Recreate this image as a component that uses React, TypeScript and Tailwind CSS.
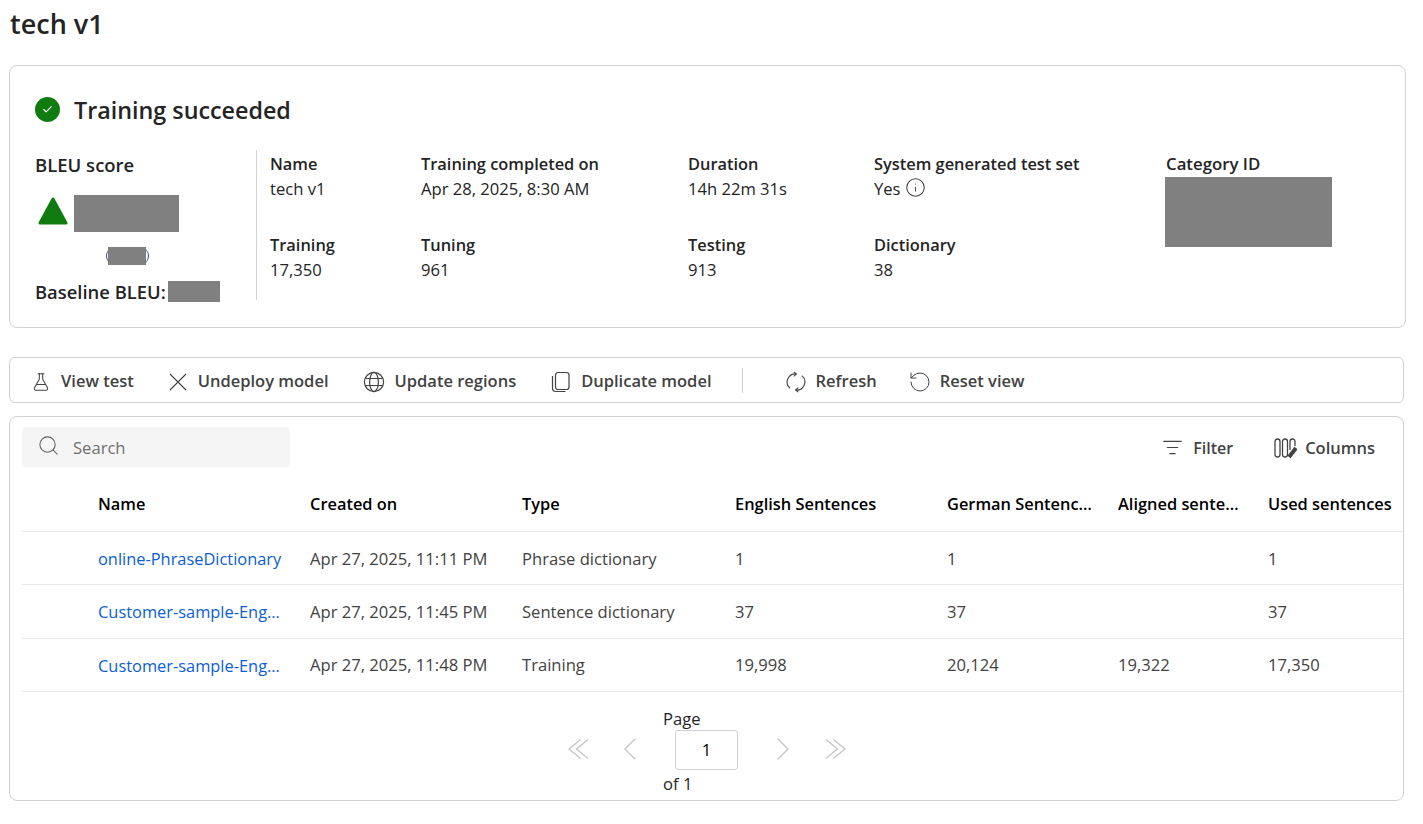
import { Search, RotateCcw, ListFilter, ChevronLeft, ChevronRight, Info, Check, FlaskConical } from 'lucide-react';

const rows = [
  { name: 'online-PhraseDictionary', created: 'Apr 27, 2025, 11:11 PM', type: 'Phrase dictionary', en: '1', de: '1', aligned: '', used: '1' },
  { name: 'Customer-sample-English-German-Sentence.txt', created: 'Apr 27, 2025, 11:45 PM', type: 'Sentence dictionary', en: '37', de: '37', aligned: '', used: '37' },
  { name: 'Customer-sample-English-German-Training.txt', created: 'Apr 27, 2025, 11:48 PM', type: 'Training', en: '19,998', de: '20,124', aligned: '19,322', used: '17,350' },
];

const gridCols = 'grid grid-cols-[76px_212px_212px_213px_212px_171px_150px_136px]';

function Field({ label, value, children }: { label: string; value: string; children?: React.ReactNode }) {
  return (
    <div>
      <div className="text-[16.4px] leading-[24px] font-semibold text-[#242424] whitespace-nowrap">{label}</div>
      <div className="text-[16.6px] leading-[26px] text-[#242424] flex items-center gap-[4px] whitespace-nowrap">{value}{children}</div>
    </div>
  );
}

function ToolButton({ icon, label, className }: { icon: React.ReactNode; label: string; className?: string }) {
  return (
    <div className={'flex items-center gap-[10px] text-[16.5px] font-semibold text-[#424242] whitespace-nowrap ' + (className || '')}>
      {icon}
      <span>{label}</span>
    </div>
  );
}

export default function App() {
  return (
    <div className="w-[1423px] h-[824px] bg-white overflow-hidden px-[9px] font-['Open_Sans','Noto_Sans',sans-serif] text-[#242424]">
      <h1 className="text-[27px] leading-[36px] font-semibold pt-[6px] pl-px h-[65px]">tech v1</h1>

      <section className="w-[1397px] h-[263px] border border-[#d1d1d1] rounded-[8px] pt-[30px] pl-[25px]">
        <div className="flex items-center gap-[14px] h-[27px]">
          <div className="w-[25px] h-[25px] rounded-full bg-[#107c10] flex items-center justify-center">
            <Check className="w-[11px] h-[11px] text-white" strokeWidth={2.5} />
          </div>
          <span className="text-[23.3px] leading-[27px] font-semibold pt-px">Training succeeded</span>
        </div>

        <div className="flex mt-[27px]">
          <div className="w-[222px] h-[150px] border-r border-[#d1d1d1] shrink-0">
            <div className="text-[18.5px] leading-[28px] font-semibold pt-px h-[28px]">BLEU score</div>
            <div className="flex items-start mt-[17px] pl-[3px] gap-[6px]">
              <svg className="mt-px" width="30" height="29" viewBox="0 0 30 29" aria-hidden="true">
                <path d="M15 3 L28 27 L2 27 Z" fill="#107c10" stroke="#107c10" strokeWidth="3" strokeLinejoin="round" />
              </svg>
              <div className="w-[105px] h-[37px] bg-[#808080]" />
            </div>
            <div className="flex justify-center w-[184px] mt-[15px]">
              <div className="w-[43px] h-[18px] rounded-[9px] border-x border-[#3b4a8a] flex justify-center">
                <div className="w-[38px] h-[18px] bg-[#808080]" />
              </div>
            </div>
            <div className="flex items-center mt-[16px] h-[21px] text-[18.4px] font-semibold whitespace-nowrap">
              <span className="pt-px">Baseline BLEU:</span>
              <div className="w-[52px] h-[21px] bg-[#808080] ml-[2px]" />
            </div>
          </div>

          <div className="pl-[13px] grid grid-cols-[151px_267px_186px_291px] grid-rows-[81px_auto] pt-[2px]">
            <Field label="Name" value="tech v1" />
            <Field label="Training completed on" value="Apr 28, 2025, 8:30 AM" />
            <Field label="Duration" value="14h 22m 31s" />
            <Field label="System generated test set" value="Yes">
              <Info className="w-[21px] h-[21px] text-[#424242] -mt-[3px]" strokeWidth={1.2} />
            </Field>
            <Field label="Training" value="17,350" />
            <Field label="Tuning" value="961" />
            <Field label="Testing" value="913" />
            <Field label="Dictionary" value="38" />
          </div>

          <div className="pt-[2px]">
            <div className="text-[16.8px] leading-[24px] font-semibold pl-px mb-px">Category ID</div>
            <div className="w-[167px] h-[70px] bg-[#808080]" />
          </div>
        </div>
      </section>

      <div className="w-[1395px] h-[46px] mt-[29px] pt-[3px] border border-[#d1d1d1] rounded-[6px] flex items-center pl-[21px]">
        <ToolButton label="View test" icon={<FlaskConical className="w-[20px] h-[20px]" strokeWidth={1.25} />} />
        <ToolButton
          label="Undeploy model"
          className="ml-[34px]"
          icon={
            <svg width="20" height="20" viewBox="0 0 20 20" fill="none" stroke="#424242" strokeWidth="1.1" aria-hidden="true">
              <path d="M2 2 L18 18 M18 2 L2 18" />
            </svg>
          }
        />
        <ToolButton
          label="Update regions"
          className="ml-[34px]"
          icon={
            <svg width="22" height="22" viewBox="0 0 22 22" fill="none" stroke="#424242" strokeWidth="1.2" aria-hidden="true">
              <circle cx="11" cy="11" r="9.6" />
              <ellipse cx="11" cy="11" rx="4.4" ry="9.6" />
              <path d="M2.4 7.5 H19.6 M2.4 14.5 H19.6" />
            </svg>
          }
        />
        <ToolButton
          label="Duplicate model"
          className="ml-[35px]"
          icon={
            <svg width="20" height="22" viewBox="0 0 20 22" fill="none" stroke="#424242" strokeWidth="1.2" aria-hidden="true">
              <rect x="4.5" y="1.5" width="13.5" height="17" rx="2.5" />
              <path d="M1.5 5 V17.5 C1.5 19.5 3 20.5 5 20.5 H14.5" />
            </svg>
          }
        />
        <div className="w-px h-[25px] bg-[#d1d1d1] ml-[30px] -mt-[3px]" />
        <ToolButton
          label="Refresh"
          className="ml-[43px]"
          icon={
            <svg width="20" height="22" viewBox="0 0 22 24" fill="none" stroke="#424242" strokeWidth="1.2" aria-hidden="true">
              <path d="M4.5 19 A9 9 0 0 1 11.5 3.2 M8.5 0.8 L11.5 3.2 L8.5 5.8" />
              <path d="M17.5 5 A9 9 0 0 1 10.5 20.8 M13.5 18.2 L10.5 20.8 L13.5 23.2" />
            </svg>
          }
        />
        <ToolButton label="Reset view" className="ml-[33px]" icon={<RotateCcw className="w-[24px] h-[24px] -mx-[2px]" strokeWidth={1} />} />
      </div>

      <section className="w-[1395px] h-[385px] mt-[13px] border border-[#d1d1d1] rounded-[8px] pt-[10px] pl-[12px] overflow-hidden">
        <div className="flex items-center justify-between pr-[28px] pb-px">
          <div className="w-[268px] h-[40px] bg-[#f5f5f5] rounded-[4px] flex items-center pl-[15px] gap-[13px] text-[16.6px] text-[#707070]">
            <Search className="w-[23px] h-[23px] text-[#616161] -mt-[3px]" strokeWidth={1.1} />
            <span className="pt-[2px]">Search</span>
          </div>
          <div className="flex items-center text-[16.5px] font-semibold text-[#424242] pt-[2px]">
            <ListFilter className="w-[21px] h-[21px] mr-[10px] -mt-px" strokeWidth={1.2} />
            <span className="text-[16px]">Filter</span>
            <svg className="ml-[41px] mr-[8px]" width="23" height="22" viewBox="0 0 23 22" fill="none" stroke="#424242" strokeWidth="1.3" aria-hidden="true">
              <rect x="1" y="2" width="5" height="18" rx="2.5" />
              <rect x="8.5" y="2" width="5" height="18" rx="2.5" />
              <path d="M16 13 V4.5 a2.5 2.5 0 0 1 5 0 V9" />
              <path d="M15 20 L22 11" strokeWidth="4" />
            </svg>
            <span>Columns</span>
          </div>
        </div>

        <div className={gridCols + ' h-[64px] pt-[10px] items-center border-b border-[#e8e8e8] text-[16.4px] font-semibold text-[#000000] whitespace-nowrap'}>
          <div />
          <div>Name</div>
          <div>Created on</div>
          <div>Type</div>
          <div>English Sentences</div>
          <div className="w-[147px] truncate">German Sentences</div>
          <div className="w-[125px] truncate">Aligned sentences</div>
          <div>Used sentences</div>
        </div>

        {rows.map(r => (
          <div key={r.created} className={gridCols + ' h-[53.33px] pt-[2px] items-center border-b border-[#e8e8e8] text-[16.6px] whitespace-nowrap'}>
            <div />
            <div className="w-[184px] truncate text-[16.4px] text-[#0b5ed7]">{r.name}</div>
            <div className="text-[#424242]">{r.created}</div>
            <div className="text-[#424242]">{r.type}</div>
            <div className="text-[#424242]">{r.en}</div>
            <div className="text-[#424242]">{r.de}</div>
            <div className="text-[#424242]">{r.aligned}</div>
            <div className="text-[#424242]">{r.used}</div>
          </div>
        ))}

        <div className="relative h-[108px] text-[16.6px]">
          <div className="absolute left-[641px] top-[16px] leading-[22px]">Page</div>
          <div className="absolute left-[641px] top-[81px] leading-[22px]">of 1</div>
          <div className="flex items-center pt-[38px] pl-[536px] text-[#c4c4c4]">
            <svg className="mx-[9.5px] -mt-[2px]" width="21" height="20" viewBox="0 0 21 20" fill="none" stroke="#c4c4c4" strokeWidth="1.3" aria-hidden="true">
              <path d="M12.5 0.5 L1 10 L12.5 19.5 M20 0.5 L8.5 10 L20 19.5" />
            </svg>
            <ChevronLeft className="w-[40px] h-[40px] ml-[12px] -mt-[2px]" strokeWidth={0.8} />
            <div className="w-[63px] h-[40px] ml-[25px] border border-[#d1d1d1] rounded-[3px] flex items-center justify-center text-[#000000]">1</div>
            <ChevronRight className="w-[40px] h-[40px] ml-[25px] -mt-[2px]" strokeWidth={0.8} />
            <svg className="ml-[21.5px] -mt-[2px]" width="21" height="20" viewBox="0 0 21 20" fill="none" stroke="#c4c4c4" strokeWidth="1.3" aria-hidden="true">
              <path d="M8.5 0.5 L20 10 L8.5 19.5 M1 0.5 L12.5 10 L1 19.5" />
            </svg>
          </div>
        </div>
      </section>
    </div>
  );
}
